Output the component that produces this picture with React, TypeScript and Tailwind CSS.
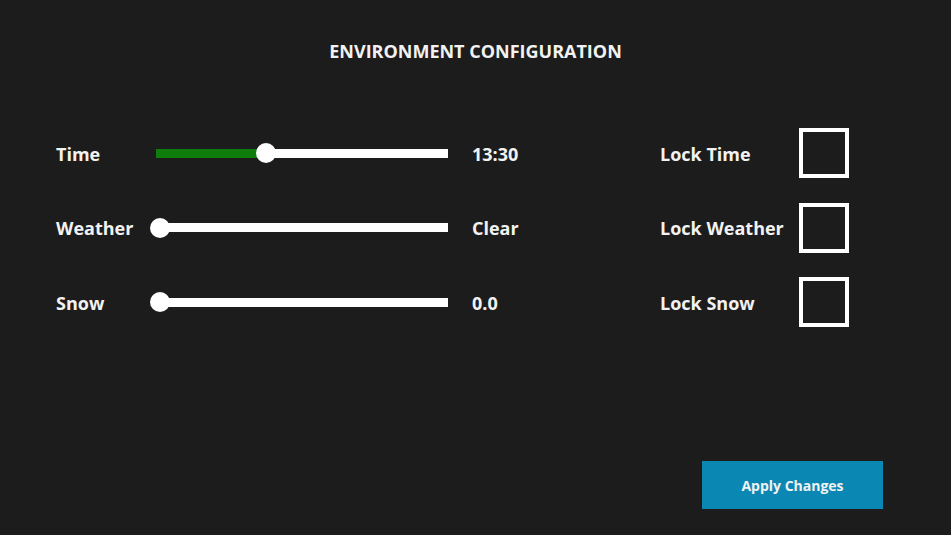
import { useState } from 'react';

// Environment settings panel: sliders on the left, lock toggles on the right
interface Setting {
  label: string;
  value: string;
  offset: number; // thumb centre, px from the start of the track
  filled: boolean;
  lockLabel: string;
}

const SETTINGS: Setting[] = [
  { label: 'Time', value: '13:30', offset: 110, filled: true, lockLabel: 'Lock Time' },
  { label: 'Weather', value: 'Clear', offset: 4, filled: false, lockLabel: 'Lock Weather' },
  { label: 'Snow', value: '0.0', offset: 4, filled: false, lockLabel: 'Lock Snow' },
];

function Slider({ offset, filled }: { offset: number; filled: boolean }) {
  return (
    <div className="relative w-[292px] h-[9px] bg-white">
      {filled && (
        <div className="absolute left-0 top-0 h-full bg-[#0f7d0b]" style={{ width: offset }} />
      )}
      <div
        className="absolute top-1/2 w-[20px] h-[20px] -translate-x-1/2 -translate-y-1/2 rounded-full bg-white"
        style={{ left: offset }}
      />
    </div>
  );
}

function LockBox({ checked, onToggle }: { checked: boolean; onToggle: () => void }) {
  return (
    <button
      onClick={onToggle}
      className="w-[50px] h-[50px] border-[4px] border-white bg-transparent flex items-center justify-center"
    >
      {checked && <div className="w-[26px] h-[26px] bg-white" />}
    </button>
  );
}

export default function App() {
  const [locks, setLocks] = useState([false, false, false]);

  return (
    <div className="w-[951px] h-[535px] bg-[#1c1c1c] text-[#f2f2f2] flex flex-col font-['Open_Sans',sans-serif] font-bold">
      <h1 className="pt-[39px] text-center text-[18px] leading-[24px]">ENVIRONMENT CONFIGURATION</h1>

      <div className="mt-[65px] flex flex-col gap-[24.5px]">
        {SETTINGS.map((s, i) => (
          <div key={s.label} className="flex items-center h-[50px] pl-[56px]">
            <span className="w-[100px] text-[18px] pt-[2px]">{s.label}</span>
            <Slider offset={s.offset} filled={s.filled} />
            <span className="ml-[24px] w-[188px] text-[18px] pt-[2px]">{s.value}</span>
            <span className="w-[139px] text-[18px] pt-[2px]">{s.lockLabel}</span>
            <LockBox
              checked={locks[i]}
              onToggle={() => setLocks(locks.map((v, j) => (j === i ? !v : v)))}
            />
          </div>
        ))}
      </div>

      <div className="mt-[134px] flex justify-end pr-[68px]">
        <button className="w-[181px] h-[48px] bg-[#0b87b4] text-[14px] text-[#f2f2f2]">
          Apply Changes
        </button>
      </div>
    </div>
  );
}
